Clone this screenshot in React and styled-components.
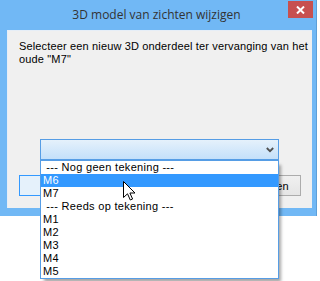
import React from "react";
import styled, { createGlobalStyle } from "styled-components";

const Global = createGlobalStyle`
  html, body { margin: 0; padding: 0; background: #ffffff; }
  body { width: 320px; height: 281px; overflow: hidden; font-family: "Liberation Sans", Arial, sans-serif; }
`;

const Window = styled.div`
  width: 316px;
  height: 216px;
  background: #71b8f5;
  border-right: 1px solid #5d9fd8;
  display: flex;
  flex-direction: column;
  box-sizing: content-box;
`;

const TitleBar = styled.div`
  height: 30px;
  flex: none;
  display: grid;
  grid-template-columns: 1fr auto 1fr;
  padding-right: 3px;
`;

const Title = styled.div`
  grid-column: 2;
  padding-top: 7px;
  font-family: "Open Sans", "Noto Sans", sans-serif;
  font-size: 12px;
  line-height: 16px;
  color: #333333;
  white-space: nowrap;
`;

const CloseButton = styled.div`
  grid-column: 3;
  justify-self: end;
  align-self: start;
  margin-top: 1px;
  width: 25px;
  height: 17px;
  background: #c75050;
  display: flex;
  align-items: center;
  justify-content: center;
`;

const Panel = styled.div`
  margin: 0 4px 8px 7px;
  flex: 1;
  min-height: 0;
  background: #f0f0f0;
  border-top: 1px solid #e6eef7;
  border-left: 1px solid #e6eef7;
  padding: 9px 11px 12px 11px;
  display: flex;
  flex-direction: column;
`;

const Message = styled.div`
  font-size: 11px;
  line-height: 13px;
  letter-spacing: 0.15px;
  white-space: nowrap;
  color: #000;
`;

const ComboWrap = styled.div`
  position: relative;
  margin-top: 73px;
  margin-left: 21px;
  width: 239px;
  z-index: 2;
`;

const Combo = styled.div`
  height: 19px;
  border: 1px solid #569de5;
  background: linear-gradient(#e5f1fb, #c4e0fa);
  display: flex;
  align-items: center;
  justify-content: flex-end;
  padding-right: 4px;
`;

const List = styled.div`
  position: absolute;
  top: 100%;
  left: 0;
  width: 237px;
  background: #ffffff;
  border: 1px solid #569de5;
  box-shadow: 3px 4px 3px -1px rgba(0, 0, 0, 0.35);
`;

const Item = styled.div`
  height: 13px;
  line-height: 13px;
  font-size: 11px;
  letter-spacing: 0.3px;
  padding-left: 2px;
  white-space: pre;
  overflow: hidden;
  color: ${(p) => (p.$selected ? "#ffffff" : "#000000")};
  background: ${(p) => (p.$selected ? "#3399ff" : "transparent")};
`;

const ButtonRow = styled.div`
  margin-top: auto;
  display: flex;
  justify-content: space-between;
`;

const Button = styled.div`
  width: 75px;
  height: 21px;
  box-sizing: border-box;
  border: 1px solid ${(p) => (p.$default ? "#3399ff" : "#acacac")};
  background: ${(p) => (p.$default ? "#e5f1fb" : "linear-gradient(#f0f0f0, #e5e5e5)")};
  box-shadow: ${(p) => (p.$default ? "inset 0 0 0 1px #e5f1fb" : "none")};
  font-size: 11px;
  display: flex;
  align-items: center;
  justify-content: center;
  color: #000;
`;

const Cursor = styled.svg`
  position: absolute;
  left: 123px;
  top: 181px;
  z-index: 5;
`;

const items = [
  " --- Nog geen tekening ---",
  "M6",
  "M7",
  " --- Reeds op tekening ---",
  "M1",
  "M2",
  "M3",
  "M4",
  "M5",
];

export default function App() {
  return (
    <>
      <Global />
      <Window>
        <TitleBar>
          <Title>3D model van zichten wijzigen</Title>
          <CloseButton>
            <svg width="9" height="8" viewBox="0 0 9 8">
              <path d="M1 0.5 L8 7.5 M8 0.5 L1 7.5" stroke="#fff" strokeWidth="2" />
            </svg>
          </CloseButton>
        </TitleBar>
        <Panel>
          <Message>
            Selecteer een nieuw 3D onderdeel ter vervanging van het
            <br />
            oude "M7"
          </Message>
          <ComboWrap>
            <Combo>
              <svg width="8" height="6" viewBox="0 0 8 6">
                <path d="M0.8 1 L4 4.2 L7.2 1" stroke="#505050" strokeWidth="1.8" fill="none" />
              </svg>
            </Combo>
            <List>
              {items.map((t, i) => (
                <Item key={i} $selected={i === 1}>
                  {t}
                </Item>
              ))}
            </List>
          </ComboWrap>
          <ButtonRow>
            <Button $default>OK</Button>
            <Button>Annuleren</Button>
          </ButtonRow>
        </Panel>
      </Window>
      <Cursor width="13" height="20" viewBox="0 0 13 20">
        <path
          d="M0.5 0.5 L0.5 16.5 L4.5 12.8 L7.3 19 L9.6 18 L6.9 12 L12 12 Z"
          fill="#ffffff"
          stroke="#000000"
          strokeWidth="1"
          strokeLinejoin="miter"
        />
      </Cursor>
    </>
  );
}
